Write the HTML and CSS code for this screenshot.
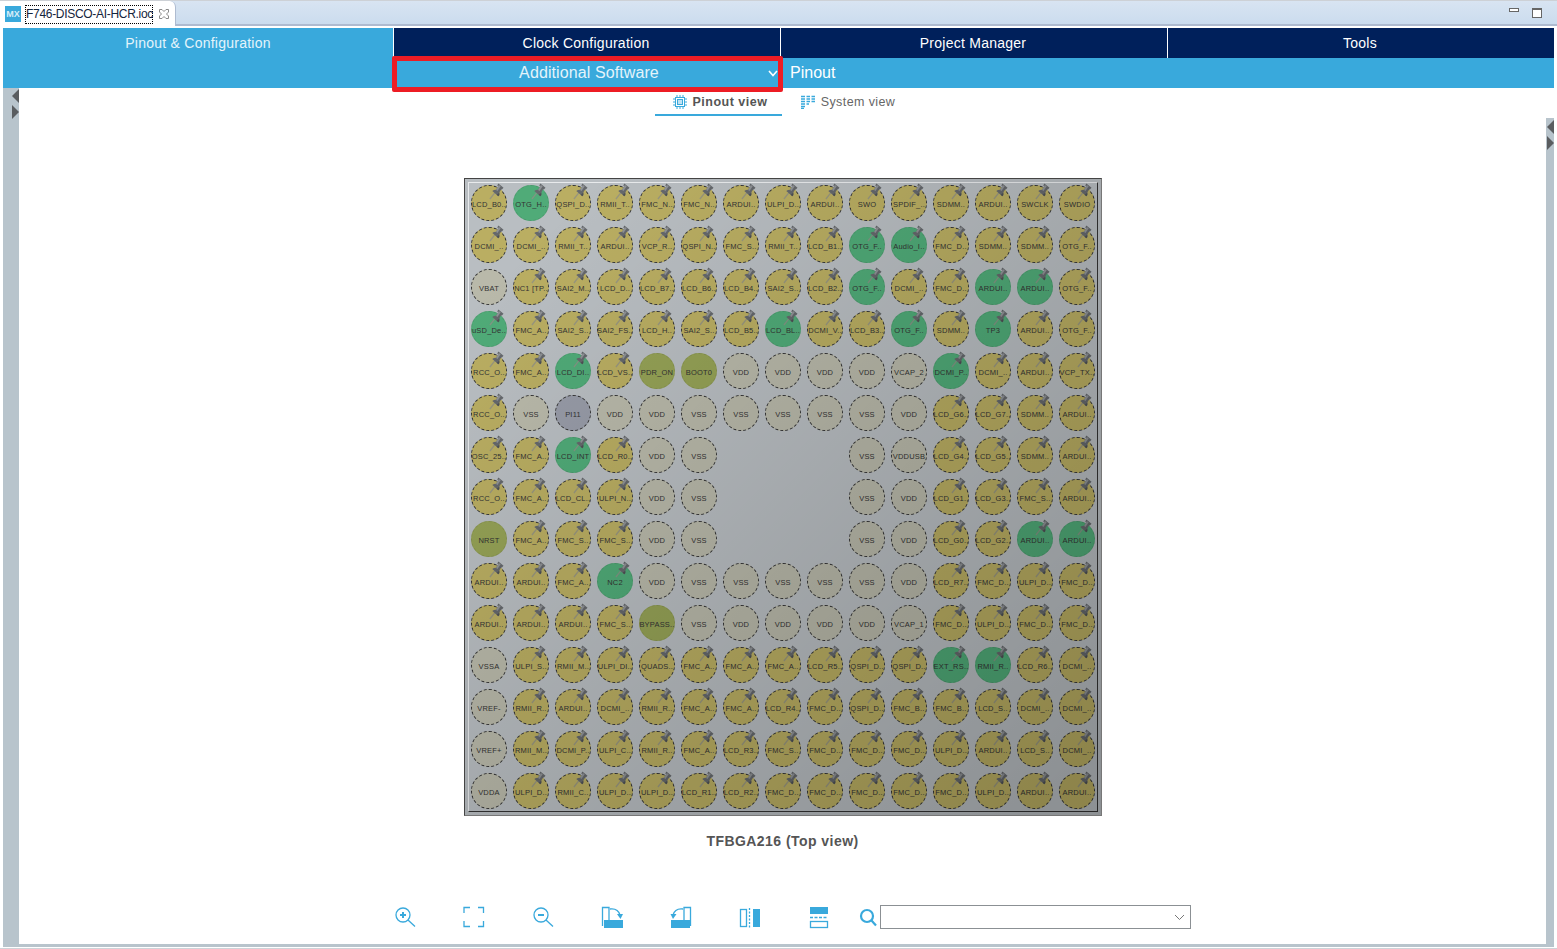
FILE: index.html
```html
<!DOCTYPE html>
<html lang="en">
<head>
  <meta charset="UTF-8">
  <title>F746-DISCO-AI-HCR.ioc</title>
  <link rel="stylesheet" href="styles.css">
</head>
<body>

  <svg class="defs" width="0" height="0">
    <symbol id="pin" viewBox="0 0 16 18">
      <path d="M1 17 L6.500 10" stroke="#8f8f86" stroke-width="1.300" fill="none" opacity=".8"/>
      <path d="M10 0.500 L15.500 5 L13.500 7 L12.800 6.500 L11 10 Q11.500 12.500 10 14 L3.500 8.500 Q5 7 7.500 7 L9.800 3.500 L8.800 2.500 Z" fill="#65686c"/>
      <path d="M10.500 2 L12.500 3.500 L9 8.500 L7.500 7.500 Z" fill="#8f9296"/>
      <path d="M11 10 Q11.500 12.500 10 14 L8 12.500 Q10 11.500 11 10 Z" fill="#4d5054"/>
    </symbol>
  </svg>

  <div class="tabbar">
    <div class="tab">
      <span class="tab-icon">MX</span>
      <span class="tab-label">F746-DISCO-AI-HCR.ioc</span>
      <svg class="tab-close" width="12" height="12" viewBox="0 0 12 12">
        <path d="M1.500 1.500 H4 L6 3.500 L8 1.500 H10.500 V4 L8.500 6 L10.500 8 V10.500 H8 L6 8.500 L4 10.500 H1.500 V8 L3.500 6 L1.500 4 Z" fill="#fff" stroke="#8a8a8a"/>
      </svg>
    </div>
    <div class="win-buttons">
      <span class="win-min"></span>
      <span class="win-max"></span>
    </div>
  </div>

  <div class="header">
    <div class="nav-row">
      <div class="nav-item active">Pinout &amp; Configuration</div>
      <div class="nav-item">Clock Configuration</div>
      <div class="nav-item">Project Manager</div>
      <div class="nav-item">Tools</div>
    </div>
    <div class="sub-row">
      <div class="sub-spacer"></div>
      <div class="sub-dropdown">
        <span>Additional Software</span>
        <svg class="sub-chevron" width="10" height="7" viewBox="0 0 10 7">
          <path d="M1 1 L5 5.500 L9 1" fill="none" stroke="#fff" stroke-width="1.600"/>
        </svg>
      </div>
      <div class="sub-pinout">Pinout</div>
    </div>
  </div>

  <div class="workspace">
    <div class="side side-left">
      <span class="arrow-left"></span>
      <span class="arrow-right"></span>
    </div>

    <div class="canvas">
      <div class="views">
        <div class="view selected">
          <svg width="14" height="14" viewBox="0 0 14 14" fill="none" stroke="#39a9dc">
            <rect x="2.500" y="2.500" width="9" height="9"/>
            <rect x="4.500" y="4.500" width="5" height="5" fill="#bfe2f3"/>
            <path d="M4 0V2M7 0V2M10 0V2M4 12V14M7 12V14M10 12V14M0 4H2M0 7H2M0 10H2M12 4H14M12 7H14M12 10H14"/>
          </svg>
          <span>Pinout view</span>
        </div>
        <div class="view">
          <svg width="15" height="14" viewBox="0 0 15 14" fill="none" stroke="#39a9dc" stroke-width="1.300">
            <path d="M0 1.500H4M0 4H4M0 6.500H4M0 9H4M0 11.500H4M0 13.500H3M5.500 1.500H9M5.500 4H9M5.500 6.500H9M5.500 9H8M10.500 1.500H14M10.500 4H14M10.500 6.500H14"/>
          </svg>
          <span>System view</span>
        </div>
      </div>

      <div class="chip">
        <div class="balls" id="balls"></div>
      </div>
      <div class="chip-caption">TFBGA216 (Top view)</div>

      <div class="toolbar">
        <svg class="tool" viewBox="0 0 24 24">
          <circle cx="10" cy="10" r="7"/><path d="M15 15L22 21.500"/><path class="thick" d="M7 10H13M10 7V13"/>
        </svg>
        <svg class="tool" viewBox="0 0 24 24">
          <path d="M2 8V2.500H8M16 2.500H21.500V8M21.500 16V21.500H16M8 21.500H2V16"/>
        </svg>
        <svg class="tool" viewBox="0 0 24 24">
          <circle cx="10" cy="10" r="7"/><path d="M15 15L22 21.500"/><path class="thick" d="M7 10H13"/>
        </svg>
        <svg class="tool" viewBox="0 0 24 24">
          <path d="M9 16V2.500H2.500V21"/><rect class="solid" x="4" y="15" width="19" height="8"/>
          <path d="M10 4Q18 3 20 10"/><path class="solid" d="M17 9H23L20.500 14Z"/>
        </svg>
        <svg class="tool" viewBox="0 0 24 24">
          <path d="M15 16V2.500H21.500V21"/><rect class="solid" x="2" y="15" width="19" height="8"/>
          <path d="M14 4Q6 3 4 10"/><path class="solid" d="M1.500 9H7.500L4 14Z"/>
        </svg>
        <svg class="tool" viewBox="0 0 24 24">
          <rect x="2.500" y="4.500" width="6" height="17"/><path d="M11.500 3V23" stroke-dasharray="2 1.500"/>
          <rect class="solid" x="15" y="4" width="7" height="18"/>
        </svg>
        <svg class="tool" viewBox="0 0 24 24">
          <rect class="solid" x="3" y="2" width="18" height="7"/><path d="M3 12.500H21" stroke-dasharray="3 1.500"/>
          <rect x="3.500" y="16.500" width="17" height="6"/>
        </svg>
        <svg class="tool tool-search" viewBox="0 0 24 24">
          <circle cx="10" cy="11" r="6"/><path d="M14.500 15.500L19 20.500"/>
        </svg>
        <div class="combo">
          <svg width="11" height="7" viewBox="0 0 11 7">
            <path d="M1 1L5.500 5.500L10 1" fill="none" stroke="#777"/>
          </svg>
        </div>
      </div>
    </div>

    <div class="side side-right">
      <span class="arrow-left"></span>
      <span class="arrow-right"></span>
    </div>
  </div>
  <div class="bottom-strip"></div>

  <script src="app.js"></script>
</body>
</html>
```

FILE: styles.css
```css
html, body {
  margin: 0;
  padding: 0;
  height: 949px;
  overflow: hidden;
}
body {
  display: flex;
  flex-direction: column;
  font-family: "Liberation Sans", Arial, sans-serif;
  background-color: #fff;
  border-bottom: 1px solid #cfd3d8;
  box-sizing: border-box;
}
.defs {
  position: absolute;
}

/* editor tab strip */
.tabbar {
  height: 26px;
  flex: none;
  display: flex;
  justify-content: space-between;
  box-sizing: border-box;
  background: linear-gradient(#d8e4f2, #cbdcee);
  border-top: 1px solid #cdd1d6;
  border-bottom: 2px solid #aebbd0;
}
.tab {
  width: 176px;
  height: 25px;
  display: flex;
  align-items: center;
  box-sizing: border-box;
  padding: 1px 0 0 5px;
  background: #fff;
  border-right: 1px solid #aebbd0;
  border-radius: 0 6px 0 0;
}
.tab-icon {
  width: 16px;
  height: 16px;
  background: #39a9dc;
  color: #d7eef9;
  font-size: 9px;
  font-weight: bold;
  line-height: 16px;
  text-align: center;
}
.tab-label {
  margin-left: 4px;
  padding: 1px 0;
  width: 128px;
  box-sizing: border-box;
  border: 1px dotted #000;
  font-size: 12px;
  letter-spacing: -.3px;
  line-height: 15px;
  color: #14243c;
  white-space: nowrap;
}
.tab-close {
  margin-left: 5px;
}
.win-buttons {
  display: flex;
  align-items: flex-start;
  gap: 13px;
  padding: 7px 15px 0 0;
}
.win-min {
  width: 10px;
  height: 4px;
  box-sizing: border-box;
  border: 1px solid #666;
  background: #fff;
}
.win-max {
  width: 10px;
  height: 10px;
  box-sizing: border-box;
  border: 1px solid #666;
  border-top-width: 2px;
  background: #fff;
}

/* perspective header */
.header {
  flex: none;
  margin: 2px 3px 0;
  color: #fff;
  background: #39a9dc;
}
.nav-row, .sub-row {
  display: grid;
  grid-template-columns: 390px 387px 387px 387px;
  height: 30px;
}
.sub-row {
  grid-template-columns: 390px 387px 774px;
}
.nav-item {
  font-size: 14px;
  letter-spacing: .25px;
  line-height: 30px;
  text-align: center;
  padding-right: 2px;
  background: #00205b;
  border-left: 1px solid #fff;
}
.nav-item.active {
  background: #39a9dc;
  border-left: none;
  padding-right: 0;
  color: #e4f4fb;
}
.sub-dropdown {
  position: relative;
  font-size: 16px;
  letter-spacing: .1px;
  line-height: 29px;
  text-align: center;
  color: #e4f4fb;
  padding-left: 5px;
}
.sub-chevron {
  position: absolute;
  right: 2px;
  top: 12px;
}
/* red annotation box drawn on the screenshot */
.sub-dropdown::after {
  content: "";
  position: absolute;
  top: -2px;
  left: -1px;
  right: -3px;
  bottom: -4px;
  border: 5px solid #ed1c24;
  border-radius: 2px;
}
.sub-pinout {
  font-size: 16px;
  line-height: 29px;
  padding-left: 10px;
}

/* main area */
.workspace {
  flex: 1;
  min-height: 0;
  display: flex;
  margin: 0 3px;
}
.side {
  flex: none;
  display: flex;
  flex-direction: column;
  align-items: flex-end;
  gap: 2px;
  background: #b8c4cc;
}
.side-left {
  width: 16px;
  padding-top: 1px;
}
.side-right {
  width: 8px;
  margin-top: 30px;
  padding-top: 2px;
}
.arrow-left, .arrow-right {
  width: 0;
  height: 0;
  border-top: 7px solid transparent;
  border-bottom: 7px solid transparent;
}
.arrow-left {
  border-right: 7px solid #5a5d60;
}
.arrow-right {
  border-left: 7px solid #5a5d60;
}
.canvas {
  flex: 1;
  min-width: 0;
  display: flex;
  flex-direction: column;
  align-items: center;
}
.views {
  display: flex;
  height: 28px;
  flex: none;
  margin-right: 2px;
}
.view {
  width: 127px;
  box-sizing: border-box;
  height: 28px;
  display: flex;
  justify-content: center;
  align-items: center;
  gap: 5px;
  padding-left: 6px;
  font-size: 12.500px;
  letter-spacing: .4px;
  color: #666;
}
.view.selected {
  font-weight: bold;
  gap: 6px;
  padding-left: 4px;
  padding-top: 2px;
  color: #555;
  letter-spacing: .5px;
  border-bottom: 2px solid #39a9dc;
}

/* package */
.chip {
  position: relative;
  width: 638px;
  height: 638px;
  flex: none;
  margin-top: 62px;
  box-sizing: border-box;
  background: #b9bec2;
  border: 1px solid #444;
  border-right-color: #777;
  border-bottom-color: #777;
  padding: 3px 3px 0;
}
.chip::before {
  content: "";
  position: absolute;
  inset: 3px;
  border: 1px solid #e8eaec;
  border-right-color: #333;
  border-bottom-color: #333;
}
/* shading that darkens the package to the lower right */
.chip::after {
  content: "";
  position: absolute;
  inset: 0;
  background: linear-gradient(135deg, rgba(0,0,0,0) 10%, rgba(0,0,0,.24) 95%);
  pointer-events: none;
}
.balls {
  position: relative;
  display: grid;
  grid-template-columns: repeat(15, 42px);
  grid-auto-rows: 42px;
  width: 630px;
}
.ball {
  position: relative;
  align-self: center;
  justify-self: center;
  width: 36px;
  height: 36px;
  box-sizing: border-box;
  border-radius: 50%;
  border: 1px dashed #333;
  display: flex;
  align-items: center;
  justify-content: center;
  font-size: 7.500px;
  letter-spacing: .2px;
  padding: 2px 0 0 1px;
  color: #333;
  white-space: nowrap;
  background: #baae62;
}
.ball.green { background: #50ab78; border-color: #4a9a6c; }
.ball.light { background: #b9b9aa; }
.ball.olive { background: #95a256; border-color: #88944e; }
.ball.gray { background: #989ca8; }
.ball.blank { visibility: hidden; }
.pin {
  position: absolute;
  left: 17px;
  top: -3px;
  width: 15px;
  height: 17px;
}
.chip-caption {
  margin-top: 17px;
  font-size: 14px;
  line-height: 16px;
  font-weight: bold;
  letter-spacing: .45px;
  color: #555;
}

/* zoom and rotate tools */
.toolbar {
  align-self: flex-start;
  display: flex;
  align-items: center;
  margin: 56px 0 0 374px;
  gap: 45px;
}
.tool {
  width: 24px;
  height: 24px;
  fill: none;
  stroke: #39a9dc;
  stroke-width: 1.300;
  flex: none;
}
.tool .thick {
  stroke-width: 2;
}
.tool .solid {
  fill: #39a9dc;
  stroke: none;
}
.tool-search {
  margin-left: -19px;
  stroke-width: 2.200;
}
.combo {
  width: 311px;
  height: 24px;
  margin-left: -46px;
  box-sizing: border-box;
  border: 1px solid #8b9094;
  display: flex;
  align-items: center;
  justify-content: flex-end;
  padding-right: 5px;
}
.bottom-strip {
  flex: none;
  height: 3px;
  margin: 0 3px 1px;
  background: #b8c4cc;
}
```

FILE: app.js
```js
// one string per row of the BGA, "*" in front means the pin is assigned (green)
const rows = [
  'LCD_B0..,*OTG_H..,QSPI_D..,RMII_T..,FMC_N..,FMC_N..,ARDUI..,ULPI_D..,ARDUI..,SWO,SPDIF_..,SDMM..,ARDUI..,SWCLK,SWDIO',
  'DCMI_..,DCMI_..,RMII_T..,ARDUI..,VCP_R..,QSPI_N..,FMC_S..,RMII_T..,LCD_B1..,*OTG_F..,*Audio_I..,FMC_D..,SDMM..,SDMM..,OTG_F..',
  'VBAT,NC1 [TP..,SAI2_M..,LCD_D..,LCD_B7..,LCD_B6..,LCD_B4..,SAI2_S..,LCD_B2..,*OTG_F..,DCMI_..,FMC_D..,*ARDUI..,*ARDUI..,OTG_F..',
  '*uSD_De..,FMC_A..,SAI2_S..,SAI2_FS..,LCD_H..,SAI2_S..,LCD_B5..,*LCD_BL..,DCMI_V..,LCD_B3..,*OTG_F..,SDMM..,*TP3,ARDUI..,OTG_F..',
  'RCC_O..,FMC_A..,*LCD_DI..,LCD_VS..,PDR_ON,BOOT0,VDD,VDD,VDD,VDD,VCAP_2,*DCMI_P..,DCMI_..,ARDUI..,VCP_TX..',
  'RCC_O..,VSS,PI11,VDD,VDD,VSS,VSS,VSS,VSS,VSS,VDD,LCD_G6..,LCD_G7..,SDMM..,ARDUI..',
  'OSC_25..,FMC_A..,*LCD_INT,LCD_R0..,VDD,VSS,,,,VSS,VDDUSB,LCD_G4..,LCD_G5..,SDMM..,ARDUI..',
  'RCC_O..,FMC_A..,LCD_CL..,ULPI_N..,VDD,VSS,,,,VSS,VDD,LCD_G1..,LCD_G3..,FMC_S..,ARDUI..',
  'NRST,FMC_A..,FMC_S..,FMC_S..,VDD,VSS,,,,VSS,VDD,LCD_G0..,LCD_G2..,*ARDUI..,*ARDUI..',
  'ARDUI..,ARDUI..,FMC_A..,*NC2,VDD,VSS,VSS,VSS,VSS,VSS,VDD,LCD_R7..,FMC_D..,ULPI_D..,FMC_D..',
  'ARDUI..,ARDUI..,ARDUI..,FMC_S..,BYPASS..,VSS,VDD,VDD,VDD,VDD,VCAP_1,FMC_D..,ULPI_D..,FMC_D..,FMC_D..',
  'VSSA,ULPI_S..,RMII_M..,ULPI_DI..,QUADS..,FMC_A..,FMC_A..,FMC_A..,LCD_R5..,QSPI_D..,QSPI_D..,*EXT_RS..,*RMII_R..,LCD_R6..,DCMI_..',
  'VREF-,RMII_R..,ARDUI..,DCMI_..,RMII_R..,FMC_A..,FMC_A..,LCD_R4..,FMC_D..,QSPI_D..,FMC_B..,FMC_B..,LCD_S..,DCMI_..,DCMI_..',
  'VREF+,RMII_M..,DCMI_P..,ULPI_C..,RMII_R..,FMC_A..,LCD_R3..,FMC_S..,FMC_D..,FMC_D..,FMC_D..,ULPI_D..,ARDUI..,LCD_S..,DCMI_..',
  'VDDA,ULPI_D..,RMII_C..,ULPI_D..,ULPI_D..,LCD_R1..,LCD_R2..,FMC_D..,FMC_D..,FMC_D..,FMC_D..,FMC_D..,ULPI_D..,ARDUI..,ARDUI..'
];

const light = ['VDD', 'VSS', 'VBAT', 'VCAP_1', 'VCAP_2', 'VDDUSB', 'VSSA', 'VREF-', 'VREF+', 'VDDA'];
const olive = ['PDR_ON', 'BOOT0', 'NRST', 'BYPASS..'];

const balls = document.getElementById('balls');

rows.forEach(function(row) {
  row.split(',').forEach(function(item) {
    const ball = document.createElement('div');
    const name = item.replace('*', '');
    ball.className = 'ball';
    ball.textContent = name;

    let pinned = false;
    if (!name) {
      ball.classList.add('blank');
    } else if (light.includes(name)) {
      ball.classList.add('light');
    } else if (olive.includes(name)) {
      ball.classList.add('olive');
    } else if (name === 'PI11') {
      ball.classList.add('gray');
    } else {
      pinned = true;
      if (item[0] === '*') ball.classList.add('green');
    }

    if (pinned) {
      ball.insertAdjacentHTML('beforeend', '<svg class="pin"><use href="#pin"/></svg>');
    }
    balls.appendChild(ball);
  });
});
```
